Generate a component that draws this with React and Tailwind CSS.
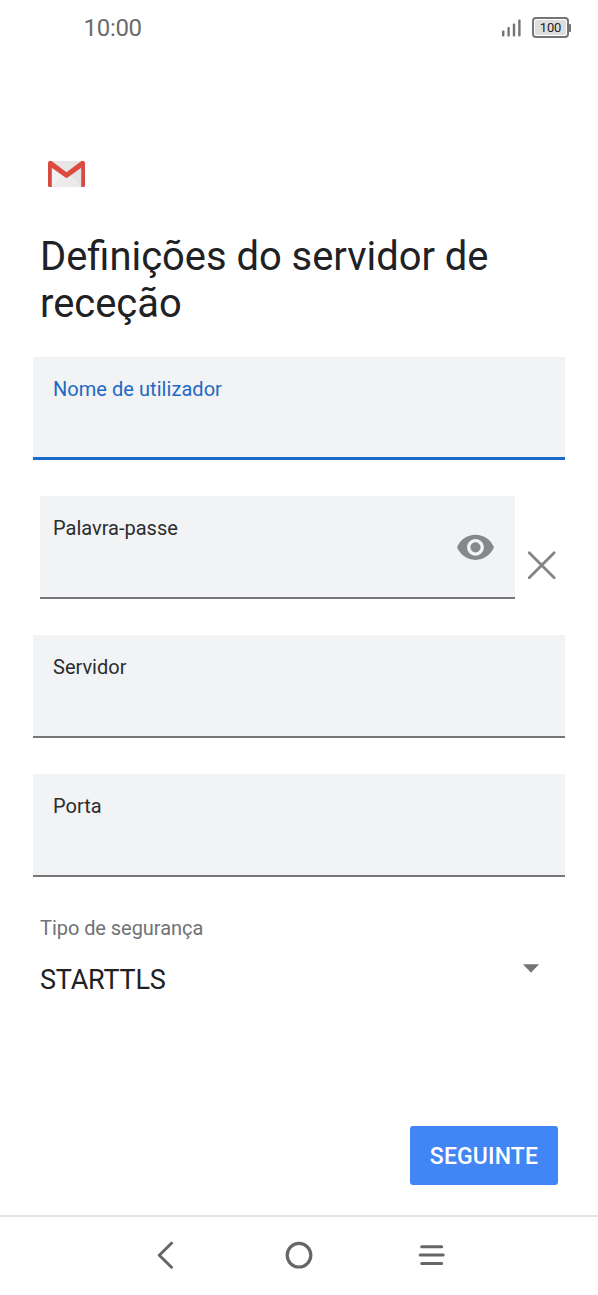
import React, { useState } from "react";

function StatusBar() {
  return (
    <div className="h-14 shrink-0 flex items-center justify-between pl-[83.5px] pr-[27px] text-[#6b6b6b]">
      <span className="text-[24px] leading-6 tracking-[-0.3px]">10:00</span>
      <div className="flex items-center gap-[10px]">
        <svg width="20" height="18" viewBox="0 0 20 18" fill="#757575">
          <rect x="0" y="11.5" width="2.4" height="6" rx="0.8" />
          <rect x="5.4" y="8" width="2.4" height="9.5" rx="0.8" />
          <rect x="10.8" y="4.5" width="2.4" height="13" rx="0.8" />
          <rect x="16.2" y="0.5" width="2.4" height="17" rx="0.8" />
        </svg>
        <div className="flex items-center mt-[-1px]">
          <div className="w-[37px] h-[21px] rounded-[4px] border-2 border-[#757575] p-px">
            <div className="h-full rounded-[2px] bg-[#dedede] flex items-center justify-center text-[13px] leading-none tracking-[-0.2px] text-[#222222]">
              100
            </div>
          </div>
          <div className="w-[2px] h-2 bg-[#757575] rounded-r-[1px]" />
        </div>
      </div>
    </div>
  );
}

function GmailLogo() {
  return (
    <svg width="38" height="28" viewBox="0 0 38 28" className="block ml-[47px]">
      <path d="M3 1H35V27H3Z" fill="#f1f1f1" />
      <path d="M5 27L14.5 16.5L19 19.5L34 7V27Z" fill="#e3e3e3" />
      <path d="M5 27L15 16L19 19L24 15.5L34 27Z" fill="#ebebeb" />
      <path d="M3 1H35L19 13Z" fill="#e6e6e6" />
      <path d="M1 3V25.5Q1 27 2.5 27H4.8V7.5Z" fill="#d54b3f" />
      <path d="M38 3V25.5Q38 27 36.5 27H34.2V7.5Z" fill="#d54b3f" />
      <path d="M1 3.5Q1 0.8 3.4 0.8Q4.2 0.8 4.9 1.3L19.5 12.3L34.1 1.3Q34.8 0.8 35.6 0.8Q38 0.8 38 3.5Q38 5 36.8 5.9L19.5 18.2L2.2 5.9Q1 5 1 3.5Z" fill="#dd4b3e" />
    </svg>
  );
}

function Field({ label, name, type = "text", active, inset, value, onChange, children }) {
  return (
    <label
      className={
        active
          ? "flex-1 flex h-[103px] pl-5 pt-5 bg-[#f1f3f5] border-b-[3px] border-[#1c69cc]"
          : inset
            ? "flex-1 flex h-[103px] pl-[13px] pt-5 bg-[#f1f3f5] border-b-2 border-[#77777b]"
            : "flex-1 flex h-[103px] pl-5 pt-5 bg-[#f1f3f5] border-b-2 border-[#77777b]"
      }
    >
      <span className="flex-1 flex flex-col min-w-0">
        <span className={active ? "text-[20px] leading-6 tracking-[0.05px] text-[#2468c4]" : "text-[20px] leading-6 text-[#2b2c2e]"}>
          {label}
        </span>
        <input
          type={type}
          name={name}
          value={value}
          onChange={onChange}
          className="w-full h-10 bg-transparent outline-none text-[26px] text-[#202124]"
        />
      </span>
      {children}
    </label>
  );
}

export default function App() {
  const [form, setForm] = useState({ user: "", password: "", server: "", port: "" });
  const [showPassword, setShowPassword] = useState(false);

  const handleChange = (e) => {
    const { name, value } = e.target;
    setForm((prev) => ({ ...prev, [name]: value }));
  };

  return (
    <div className="w-full h-[1295px] flex flex-col bg-white overflow-hidden font-['Roboto',sans-serif]">
      <StatusBar />

      <div className="flex-1 flex flex-col pt-[104px]">
        <GmailLogo />
        <h1 className="mt-[45px] px-10 text-[39.9px] leading-[47px] text-[#202124]">
          Definições do servidor de receção
        </h1>

        <div className="mt-[30px] px-[33px] flex flex-col gap-9">
          <div className="flex">
            <Field label="Nome de utilizador" name="user" active value={form.user} onChange={handleChange} />
          </div>
          <div className="flex pl-[7px]">
            <Field
              label="Palavra-passe"
              name="password"
              inset
              type={showPassword ? "text" : "password"}
              value={form.password}
              onChange={handleChange}
            >
              <button type="button" onClick={() => setShowPassword(!showPassword)} className="self-start mt-[9px] mr-[21px]">
                <svg width="37" height="41" viewBox="1 -1.33 22 24.44" fill="#85898d">
                  <path d="M12 4.5C7 4.5 2.73 7.61 1 12c1.73 4.39 6 7.5 11 7.5s9.27-3.11 11-7.5c-1.73-4.39-6-7.5-11-7.5zM12 17c-2.76 0-5-2.24-5-5s2.24-5 5-5 5 2.24 5 5-2.24 5-5 5zm0-8c-1.66 0-3 1.34-3 3s1.34 3 3 3 3-1.34 3-3-1.34-3-3-3z" />
                </svg>
              </button>
            </Field>
            <button type="button" className="self-start mt-[54px] ml-3 mr-2">
              <svg width="30" height="30" viewBox="0 0 30 30" stroke="#858585" strokeWidth="2.8" strokeLinecap="round">
                <path d="M2.2 2.7L27.2 27.7M27.2 2.7L2.2 27.7" />
              </svg>
            </button>
          </div>
          <div className="flex">
            <Field label="Servidor" name="server" value={form.server} onChange={handleChange} />
          </div>
          <div className="flex">
            <Field label="Porta" name="port" value={form.port} onChange={handleChange} />
          </div>
        </div>

        <div className="mt-[39px] px-10 flex justify-between">
          <div>
            <div className="text-[20px] leading-6 tracking-[-0.05px] text-[#6f7276]">Tipo de segurança</div>
            <div className="mt-6 text-[27px] leading-8 tracking-[-0.2px] text-[#202124]">STARTTLS</div>
          </div>
          <svg width="16" height="9" viewBox="0 0 16 9" fill="#757575" className="mt-12 mr-[19px]">
            <path d="M0 0.3H16L8 8.8Z" />
          </svg>
        </div>

        <div className="mt-auto mb-[30px] px-10 flex justify-end">
          <button type="button" className="w-[148px] h-[59px] pt-1 rounded-[3px] bg-[#4285f4] text-white text-[23px] tracking-[0.15px] font-medium">
            SEGUINTE
          </button>
        </div>
      </div>

      <div className="h-20 shrink-0 border-t-2 border-[#e3e3e3] flex justify-center pt-6 gap-[105px]">
        <svg width="28" height="28" viewBox="0 0 28 28" fill="none" stroke="#666666" strokeWidth="3" strokeLinecap="round" strokeLinejoin="round">
          <path d="M19.5 2.2L7.3 14.2L19.5 26.2" />
        </svg>
        <svg width="28" height="28" viewBox="0 0 28 28" fill="none" stroke="#666666" strokeWidth="3.2">
          <circle cx="14" cy="14.2" r="11.8" />
        </svg>
        <svg width="28" height="28" viewBox="0 0 28 28" fill="none" stroke="#666666" strokeWidth="3" strokeLinecap="round">
          <path d="M3.7 5.7H23.7M2.2 14.1H25.2M3.7 22.5H23.7" />
        </svg>
      </div>
    </div>
  );
}
